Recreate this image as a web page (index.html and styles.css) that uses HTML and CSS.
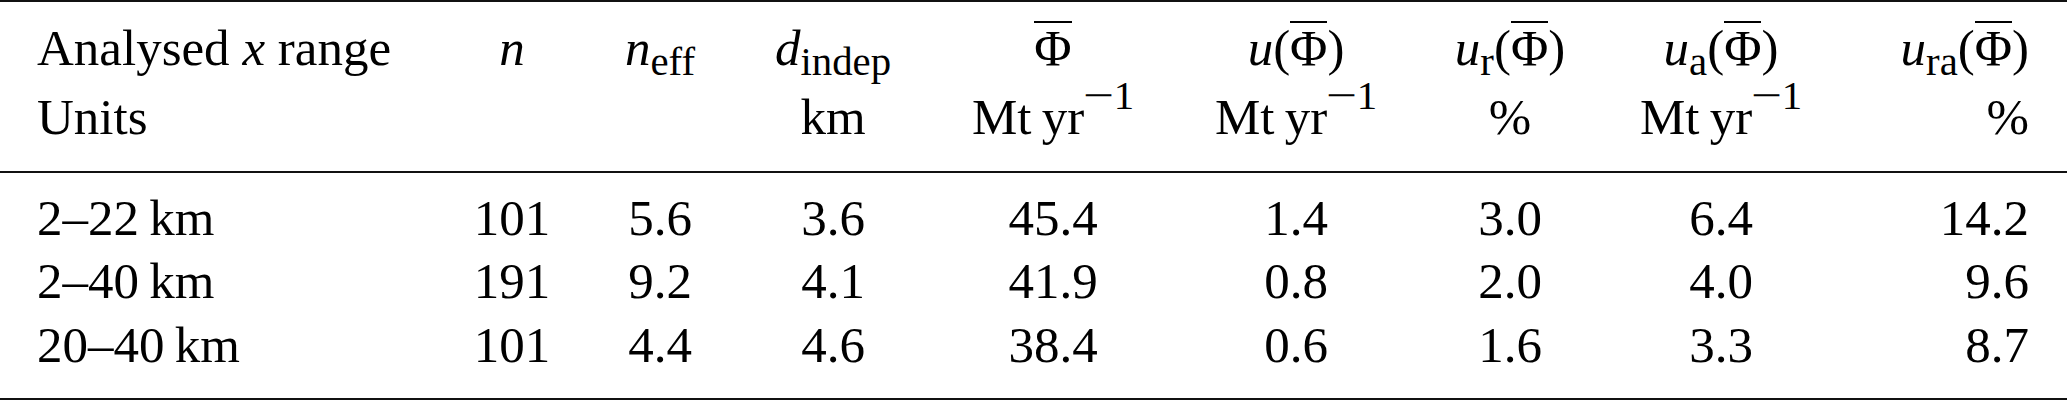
FILE: index.html
```html
<!DOCTYPE html>
<html lang="en">
<head>
<meta charset="utf-8">
<title>Table</title>
<link rel="stylesheet" href="styles.css">
</head>
<body>
<table class="tbl">
  <colgroup>
    <col class="w-range">
    <col class="w-n">
    <col class="w-neff">
    <col class="w-d">
    <col class="w-phi">
    <col class="w-u">
    <col class="w-ur">
    <col class="w-ua">
    <col class="w-ura">
  </colgroup>
  <thead>
    <tr class="h1">
      <th class="first">Analysed <span class="it">x</span> range</th>
      <th><span class="it">n</span></th>
      <th><span class="it">n</span><span class="sub">eff</span></th>
      <th><span class="it">d</span><span class="sub">indep</span></th>
      <th><span class="bar">Φ</span></th>
      <th><span class="it">u</span>(<span class="bar">Φ</span>)</th>
      <th><span class="it">u</span><span class="sub">r</span>(<span class="bar">Φ</span>)</th>
      <th><span class="it">u</span><span class="sub">a</span>(<span class="bar">Φ</span>)</th>
      <th class="last"><span class="it">u</span><span class="sub">ra</span>(<span class="bar">Φ</span>)</th>
    </tr>
    <tr class="h2">
      <th class="first">Units</th>
      <th></th>
      <th></th>
      <th>km</th>
      <th>Mt&thinsp;yr<span class="sup"><span class="minus">−</span>1</span></th>
      <th>Mt&thinsp;yr<span class="sup"><span class="minus">−</span>1</span></th>
      <th>%</th>
      <th>Mt&thinsp;yr<span class="sup"><span class="minus">−</span>1</span></th>
      <th class="last">%</th>
    </tr>
  </thead>
  <tbody>
    <tr>
      <td class="first">2–22&thinsp;km</td>
      <td>101</td><td>5.6</td><td>3.6</td><td>45.4</td><td>1.4</td><td>3.0</td><td>6.4</td>
      <td class="last">14.2</td>
    </tr>
    <tr>
      <td class="first">2–40&thinsp;km</td>
      <td>191</td><td>9.2</td><td>4.1</td><td>41.9</td><td>0.8</td><td>2.0</td><td>4.0</td>
      <td class="last">9.6</td>
    </tr>
    <tr>
      <td class="first">20–40&thinsp;km</td>
      <td>101</td><td>4.4</td><td>4.6</td><td>38.4</td><td>0.6</td><td>1.6</td><td>3.3</td>
      <td class="last">8.7</td>
    </tr>
  </tbody>
</table>
</body>
</html>
```
FILE: styles.css
```css
html, body {
  margin: 0;
  padding: 0;
  background: #fff;
}

body {
  font-family: "Liberation Serif", "Times New Roman", serif;
  color: #000;
}

.tbl {
  width: 2067px;
  table-layout: fixed;
  border-collapse: separate;
  border-spacing: 0;
  font-size: 51px;
  border-top: 2px solid #111;
  border-bottom: 2px solid #111;
}

.w-range { width: 438px; }
.w-n { width: 148px; }
.w-neff { width: 148px; }
.w-d { width: 198px; }
.w-phi { width: 242px; }
.w-u { width: 244px; }
.w-ur { width: 184px; }
.w-ua { width: 238px; }
.w-ura { width: 227px; }

.tbl th,
.tbl td {
  padding: 0;
  text-align: center;
  font-weight: normal;
  white-space: nowrap;
  vertical-align: baseline;
}

.tbl .first {
  text-align: left;
  padding-left: 37px;
}

.tbl .last {
  text-align: right;
  padding-right: 38px;
}

.h1 th {
  line-height: 63px;
  padding-top: 15px;
}

.h2 th {
  line-height: 63px;
  padding-top: 6px;
  padding-bottom: 22px;
  border-bottom: 2px solid #111;
}

.tbl tbody td {
  line-height: 63.3px;
}

.tbl tbody tr:first-child td {
  padding-top: 14px;
}

.tbl tbody tr:last-child td {
  padding-bottom: 21px;
}

.it {
  font-style: italic;
}

.sub {
  font-size: 0.8em;
  line-height: 0;
  vertical-align: -10px;
}

.sup {
  font-size: 0.8em;
  line-height: 0;
  vertical-align: 25px;
}

.minus {
  display: inline-block;
  margin: 0 0.08em;
  transform: scaleX(1.35);
}

.bar {
  display: inline-block;
  line-height: 51px;
  border-top: 2px solid #000;
}
```
